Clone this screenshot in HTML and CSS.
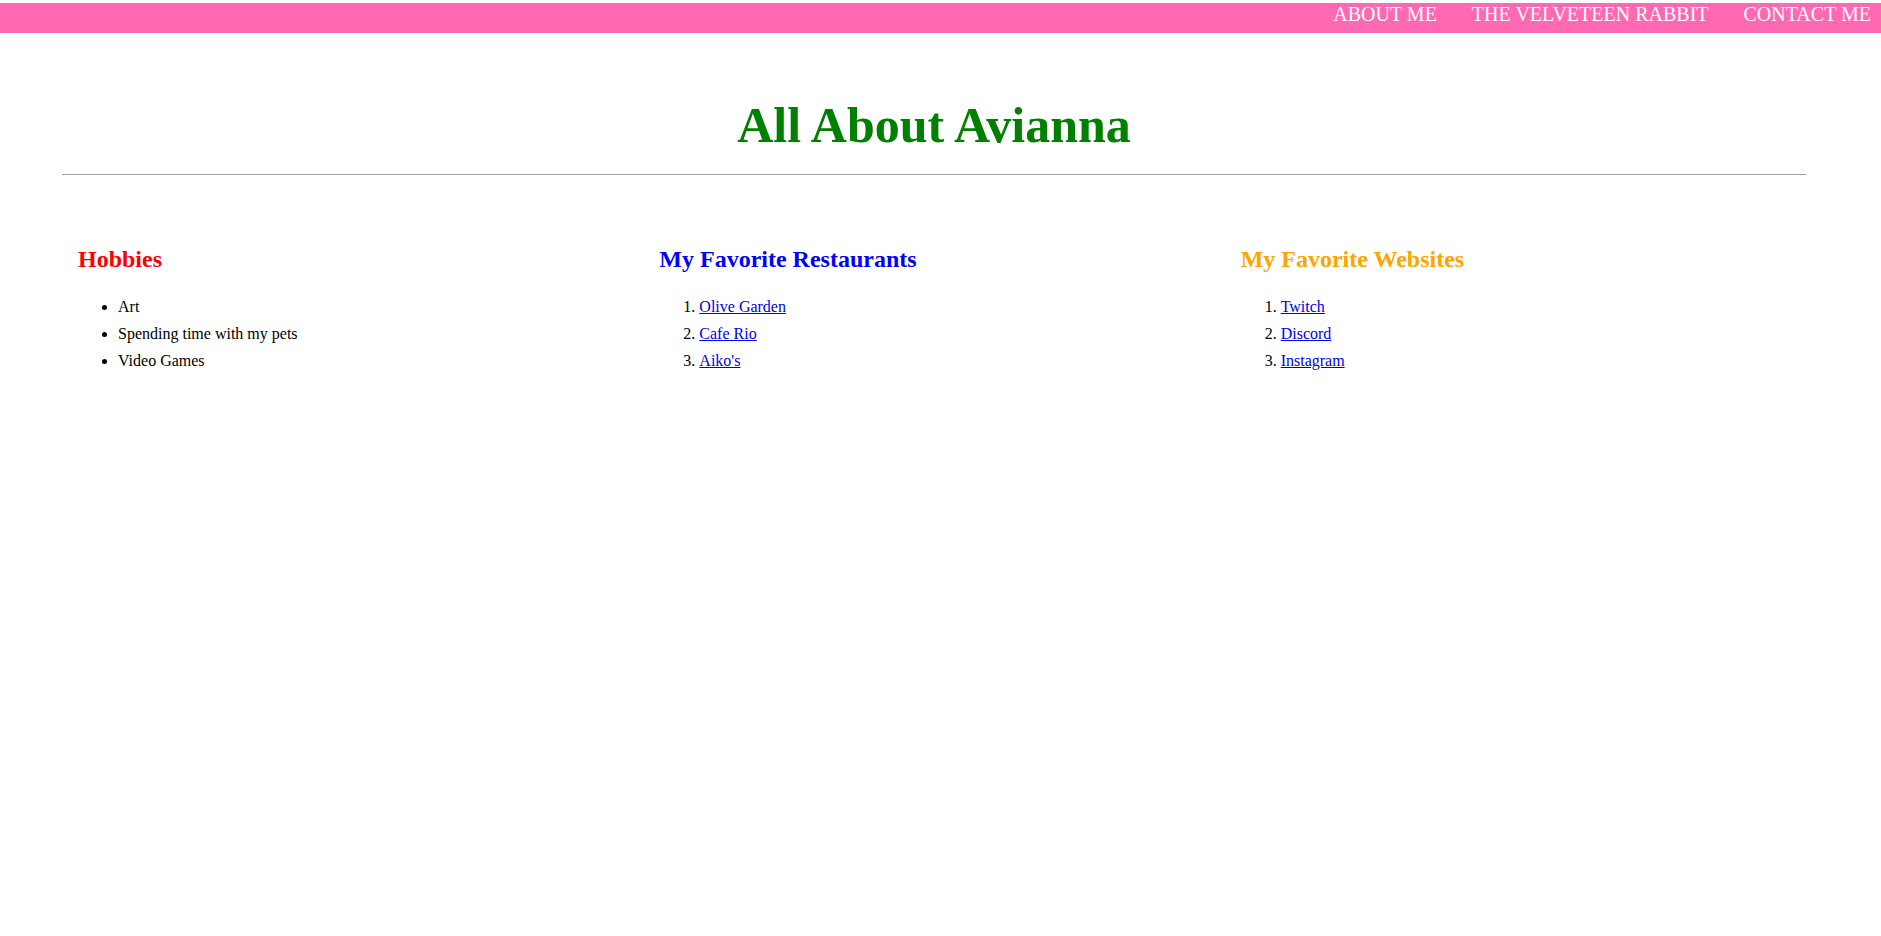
FILE: index.html
```html
<!DOCTYPE html>
<html lang="en">
<head>
<meta charset="utf-8">
<title>All About Avianna</title>
<link rel="stylesheet" href="styles.css">
</head>
<body>
<nav class="topnav">
  <a class="topnav-link" href="#">ABOUT ME</a>
  <a class="topnav-link" href="#">THE VELVETEEN RABBIT</a>
  <a class="topnav-link" href="#">CONTACT ME</a>
</nav>
<main class="page">
  <header class="page-header">
    <h1 class="page-title">All About Avianna</h1>
  </header>
  <hr class="divider">
  <section class="columns">
    <div class="column">
      <h2 class="column-title title-red">Hobbies</h2>
      <ul class="column-list">
        <li>Art</li>
        <li>Spending time with my pets</li>
        <li>Video Games</li>
      </ul>
    </div>
    <div class="column">
      <h2 class="column-title title-blue">My Favorite Restaurants</h2>
      <ol class="column-list">
        <li><a href="#">Olive Garden</a></li>
        <li><a href="#">Cafe Rio</a></li>
        <li><a href="#">Aiko's</a></li>
      </ol>
    </div>
    <div class="column">
      <h2 class="column-title title-orange">My Favorite Websites</h2>
      <ol class="column-list">
        <li><a href="#">Twitch</a></li>
        <li><a href="#">Discord</a></li>
        <li><a href="#">Instagram</a></li>
      </ol>
    </div>
  </section>
</main>
</body>
</html>
```

FILE: styles.css
```css
html, body {
  margin: 0;
  padding: 0;
  background: #ffffff;
}

body {
  font-family: "Liberation Serif", "Times New Roman", serif;
  font-size: 16px;
  color: #000000;
  padding-top: 3px;
}

.topnav {
  display: flex;
  justify-content: flex-end;
  align-items: flex-start;
  gap: 35px;
  height: 30px;
  padding-right: 10px;
  background: #ff69b4;
}

.topnav-link {
  color: #ffffff;
  text-decoration: none;
  font-size: 20px;
  line-height: 23px;
}

.page {
  margin: 0 75px 0 62px;
}

.page-header {
  padding-top: 64px;
}

.page-title {
  margin: 0;
  text-align: center;
  color: #008000;
  font-size: 50px;
  font-weight: bold;
  line-height: 56px;
}

.divider {
  margin: 21px 0 0 0;
  border: 0;
  border-top: 1px solid #a0a0a0;
  height: 0;
}

.columns {
  display: grid;
  grid-template-columns: repeat(3, 1fr);
  padding-top: 70px;
}

.column {
  padding: 0 16px;
}

.column-title {
  margin: 0;
  font-size: 24px;
  font-weight: bold;
  line-height: 28px;
}

.title-red { color: #ff0000; }
.title-blue { color: #0000ff; }
.title-orange { color: #ffa500; }

.column-list {
  margin: 20px 0 0 0;
  padding-left: 40px;
}

.column-list li {
  line-height: 27px;
}

.column-list a {
  color: #0000ee;
  text-decoration: underline;
}
```
